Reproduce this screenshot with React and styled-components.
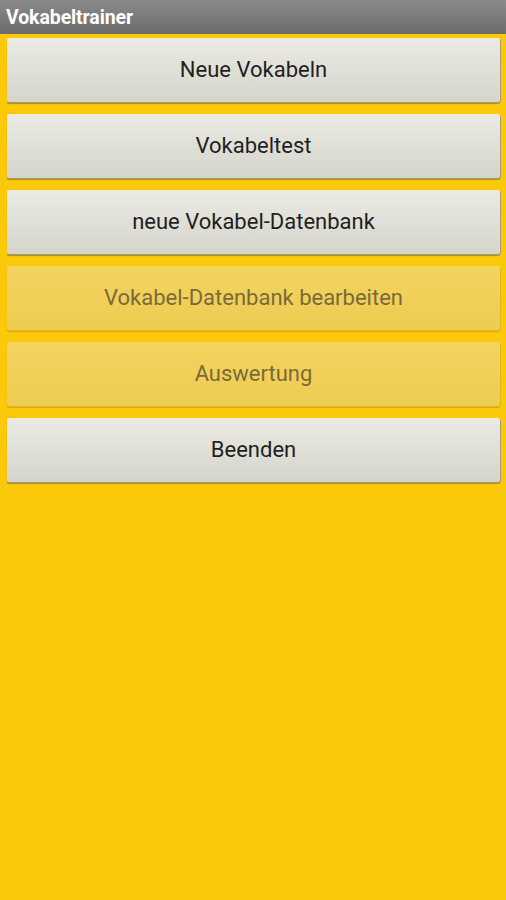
import React from "react";
import styled, { createGlobalStyle } from "styled-components";

const Global = createGlobalStyle`
  html, body { margin: 0; padding: 0; background: #fcc80a; }
  body { font-family: Roboto, "Noto Sans", sans-serif; }
`;

const Screen = styled.div`
  width: 506px;
  min-height: 900px;
  background: #fcc80a;
  display: flex;
  flex-direction: column;
`;

const TitleBar = styled.div`
  height: 34px;
  background: linear-gradient(#8a8a8a, #6c6c6c);
  display: flex;
  align-items: center;
  padding-left: 6px;
  color: #fff;
  font-weight: bold;
  font-size: 19.5px;
  letter-spacing: -0.1px;
`;

const List = styled.div`
  display: flex;
  flex-direction: column;
  gap: 12px;
  padding: 4px 6px 0 7px;
`;

const Button = styled.button`
  height: 64px;
  border: none;
  border-radius: 2px;
  font-family: Roboto, "Noto Sans", sans-serif;
  font-size: 22px;
  color: ${(p) => (p.disabled ? "#7b6a38" : "#1f1f1f")};
  background: ${(p) =>
    p.disabled
      ? "linear-gradient(#f3d45f, #edcc52)"
      : "linear-gradient(#ebeae3, #d6d5cc)"};
  box-shadow: ${(p) =>
    p.disabled
      ? "1px 1px 0 #e0b81c, 0 2px 1px rgba(170,130,0,0.45)"
      : "1px 1px 0 #a59a70, 0 2px 1px rgba(110,95,40,0.55)"};
  display: flex;
  align-items: center;
  justify-content: center;
  padding: 0 0 2px;
`;

const items = [
  { label: "Neue Vokabeln" },
  { label: "Vokabeltest" },
  { label: "neue Vokabel-Datenbank" },
  { label: "Vokabel-Datenbank bearbeiten", disabled: true },
  { label: "Auswertung", disabled: true },
  { label: "Beenden" },
];

export default function App() {
  return (
    <Screen>
      <Global />
      <TitleBar>Vokabeltrainer</TitleBar>
      <List>
        {items.map((it) => (
          <Button key={it.label} disabled={it.disabled}>
            {it.label}
          </Button>
        ))}
      </List>
    </Screen>
  );
}
